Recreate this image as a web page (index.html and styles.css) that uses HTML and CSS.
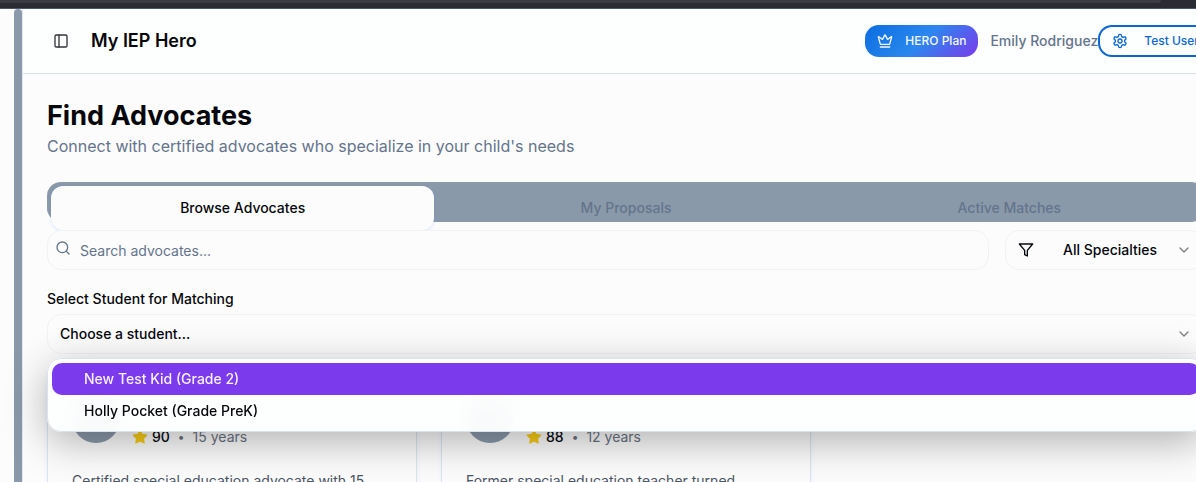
FILE: index.html
```html
<!DOCTYPE html>
<html lang="en">
<head>
<meta charset="utf-8">
<meta name="viewport" content="width=device-width, initial-scale=1">
<title>My IEP Hero</title>
<link rel="stylesheet" href="styles.css">
</head>
<body>
<div class="chrome"><div class="chrome-tab"></div></div>
<div class="shell">
  <div class="rail"></div>
  <div class="page">
    <header class="header">
      <button class="toggle" aria-label="Toggle sidebar">
        <svg class="icon" viewBox="0 0 24 24"><rect x="3" y="3" width="18" height="18" rx="2"/><path d="M9 3v18"/></svg>
      </button>
      <span class="brand">My IEP Hero</span>
      <div class="account">
        <button class="plan">
          <svg class="icon" viewBox="0 0 24 24"><path d="M11.562 3.266a.5.5 0 0 1 .876 0L15.39 8.87a1 1 0 0 0 1.516.294L21.183 5.5a.5.5 0 0 1 .798.519l-2.834 10.246a1 1 0 0 1-.956.734H5.81a1 1 0 0 1-.957-.734L2.02 6.02a.5.5 0 0 1 .798-.519l4.276 3.664a1 1 0 0 0 1.516-.294z"/><path d="M5 21h14"/></svg>
          HERO Plan
        </button>
        <span class="user-name">Emily Rodriguez</span>
        <button class="user">
          <svg class="icon" viewBox="0 0 24 24"><path d="M12.22 2h-.44a2 2 0 0 0-2 2v.18a2 2 0 0 1-1 1.73l-.43.25a2 2 0 0 1-2 0l-.15-.08a2 2 0 0 0-2.73.73l-.22.38a2 2 0 0 0 .73 2.73l.15.1a2 2 0 0 1 1 1.72v.51a2 2 0 0 1-1 1.74l-.15.09a2 2 0 0 0-.73 2.73l.22.38a2 2 0 0 0 2.73.73l.15-.08a2 2 0 0 1 2 0l.43.25a2 2 0 0 1 1 1.73V20a2 2 0 0 0 2 2h.44a2 2 0 0 0 2-2v-.18a2 2 0 0 1 1-1.73l.43-.25a2 2 0 0 1 2 0l.15.08a2 2 0 0 0 2.73-.73l.22-.39a2 2 0 0 0-.73-2.73l-.15-.08a2 2 0 0 1-1-1.74v-.5a2 2 0 0 1 1-1.74l.15-.09a2 2 0 0 0 .73-2.73l-.22-.38a2 2 0 0 0-2.73-.73l-.15.08a2 2 0 0 1-2 0l-.43-.25a2 2 0 0 1-1-1.73V4a2 2 0 0 0-2-2z"/><circle cx="12" cy="12" r="3"/></svg>
          Test User
        </button>
      </div>
    </header>
    <main class="main">
      <h1 class="title">Find Advocates</h1>
      <p class="subtitle">Connect with certified advocates who specialize in your child's needs</p>
      <div class="tabs" role="tablist">
        <button class="tab tab-active" role="tab" aria-selected="true">Browse Advocates</button>
        <button class="tab" role="tab" aria-selected="false">My Proposals</button>
        <button class="tab" role="tab" aria-selected="false">Active Matches</button>
      </div>
      <div class="filters">
        <div class="search">
          <svg class="icon search-icon" viewBox="0 0 24 24"><circle cx="11" cy="11" r="8"/><path d="m21 21-4.300-4.300"/></svg>
          <input class="field search-input" type="text" placeholder="Search advocates..." aria-label="Search advocates">
        </div>
        <div class="specialty">
          <svg class="icon funnel" viewBox="0 0 24 24"><path d="M22 3H2l8 9.460V19l4 2v-8.540z"/></svg>
          <select class="field specialty-select" aria-label="Specialty"><option>All Specialties</option></select>
          <svg class="icon chevron" viewBox="0 0 24 24"><path d="m6 9 6 6 6-6"/></svg>
        </div>
      </div>
      <label class="label" for="student">Select Student for Matching</label>
      <div class="student">
        <select class="field" id="student"><option>Choose a student...</option></select>
        <svg class="icon chevron" viewBox="0 0 24 24"><path d="m6 9 6 6 6-6"/></svg>
        <div class="menu" role="listbox" aria-label="Students">
          <div class="option option-active" role="option" aria-selected="true">New Test Kid (Grade 2)</div>
          <div class="option" role="option" aria-selected="false">Holly Pocket (Grade PreK)</div>
        </div>
      </div>
      <div class="cards">
        <article class="card">
          <div class="card-head">
            <div class="avatar"></div>
            <div class="rating">
              <svg class="star" viewBox="0 0 24 24"><path d="m12 2 3.090 6.260L22 9.270l-5 4.870 1.180 6.880L12 17.770l-6.180 3.250L7 14.140 2 9.270l6.910-1.010z"/></svg>
              <span class="score">90</span><span class="dot">•</span><span>15 years</span>
            </div>
          </div>
          <p class="bio">Certified special education advocate with 15</p>
        </article>
        <article class="card">
          <div class="card-head">
            <div class="avatar"></div>
            <div class="rating">
              <svg class="star" viewBox="0 0 24 24"><path d="m12 2 3.090 6.260L22 9.270l-5 4.870 1.180 6.880L12 17.770l-6.180 3.250L7 14.140 2 9.270l6.910-1.010z"/></svg>
              <span class="score">88</span><span class="dot">•</span><span>12 years</span>
            </div>
          </div>
          <p class="bio">Former special education teacher turned</p>
        </article>
      </div>
    </main>
  </div>
</div>
</body>
</html>
```

FILE: styles.css
```css
* { box-sizing: border-box; }
html, body { height: 100%; }
body {
  margin: 0;
  display: flex;
  flex-direction: column;
  overflow: hidden;
  background: #fcfcfd;
  color: #05070b;
  font: 500 14px/20px Inter, "Liberation Sans", sans-serif;
}
button, input, select { font: inherit; color: inherit; }
button { border: 0; background: none; padding: 0; }
.icon {
  width: 16px;
  height: 16px;
  flex: none;
  fill: none;
  stroke: currentColor;
  stroke-width: 2;
  stroke-linecap: round;
  stroke-linejoin: round;
}
.chrome {
  flex: none;
  height: 9px;
  background: #2a2b33;
  border-bottom: 1px solid #4a5569;
}
.chrome-tab {
  height: 3px;
  margin-right: 35px;
  background: #3a3b45;
  border-radius: 0 0 3px 0;
}
.shell { flex: 1; display: flex; min-height: 0; padding-left: 14px; overflow: hidden; }
.rail { flex: none; width: 8px; background: #8a99aa; border-radius: 4px 4px 0 0; }
/* The page column runs past the right edge of the window. */
.page {
  flex: 1;
  min-width: 0;
  margin-right: -33px;
  border-left: 1px solid #e3e8f0;
}
.header {
  display: flex;
  align-items: center;
  gap: 16px;
  height: 65px;
  padding: 0 12px 0 24px;
  background: #fdfefe;
  border-bottom: 1px solid #dde3ea;
}
.toggle { display: grid; place-items: center; width: 28px; height: 28px; }
.toggle .icon { color: #33363b; }
.brand { font-size: 18px; line-height: 28px; font-weight: 600; }
.account { display: flex; align-items: center; margin-left: auto; white-space: nowrap; }
.plan, .user {
  display: flex;
  align-items: center;
  height: 32px;
  padding: 0 12px;
  border-radius: 14px;
  font-size: 12px;
}
.plan {
  gap: 12px;
  margin-right: 12px;
  color: #f4f8ff;
  background: linear-gradient(135deg, #0a6ee0 0%, #2b87ee 50%, #7c3aed 100%);
}
.user-name { color: #64748b; }
.user {
  gap: 16px;
  padding-right: 16px;
  color: #0b68d2;
  background: #fdfefe;
  border: 2px solid #0b68d2;
}
.main { padding: 24px; }
.title { margin: 0; font-size: 27px; line-height: 36px; font-weight: 700; }
.subtitle { margin: 0 0 24px; font-size: 16px; line-height: 24px; font-weight: 400; color: #64748b; }
.tabs {
  display: grid;
  grid-template-columns: repeat(3, 1fr);
  height: 40px;
  margin-bottom: 8px;
  padding: 4px;
  border-radius: 14px;
  background: #8a99aa;
}
.tab { height: 44px; border-radius: 12px; color: #64748b; }
.tab-active { color: #05070b; background: #fcfcfd; box-shadow: 0 1px 3px #3b82f633; }
.field {
  display: block;
  width: 100%;
  height: 40px;
  padding: 0 12px;
  border: 1px solid #f1f2f4;
  border-radius: 14px;
  background: #fcfcfd;
  appearance: none;
  outline: none;
}
.filters { display: flex; gap: 16px; margin-bottom: 19px; }
.search { position: relative; flex: 1; }
.search-icon { position: absolute; left: 8px; top: 10px; color: #64748b; }
.search-input { padding-left: 32px; font-weight: 400; }
.search-input::placeholder { color: #64748b; opacity: 1; }
.specialty { position: relative; width: 200px; }
.specialty-select { padding-left: 57px; }
.funnel { position: absolute; left: 13px; top: 12px; }
.chevron { position: absolute; right: 13px; top: 12px; color: #808286; }
.label { display: block; width: max-content; margin-bottom: 5px; }
.student { position: relative; z-index: 1; }
.menu {
  position: absolute;
  top: 44px;
  left: 0;
  right: 0;
  padding: 4px;
  border: 1px solid #dbe2ea;
  border-radius: 14px;
  background: #fdfefef5;
  backdrop-filter: blur(12px);
  box-shadow: 0 10px 40px #0000004d;
}
.option { padding: 6px 32px; border-radius: 10px; }
.option-active { color: #f5f0ff; background: #7c3aed; }
.cards {
  display: grid;
  grid-template-columns: repeat(3, 1fr);
  gap: 24px;
  margin-top: 16px;
}
.card {
  padding: 24px;
  border: 1px solid #dbe4f0;
  border-radius: 14px;
  background: #fcfcfd;
  box-shadow: 0 1px 4px #3b82f61a;
}
.card-head { display: flex; align-items: flex-start; gap: 12px; }
.avatar { width: 48px; height: 48px; border-radius: 50%; background: #8a99aa; }
.rating {
  display: flex;
  align-items: center;
  gap: 8px;
  margin-top: 32px;
  font-weight: 400;
  color: #6b7280;
}
.star { width: 16px; height: 16px; fill: #facc15; stroke: #facc15; stroke-width: 2; stroke-linejoin: round; }
.score { margin-left: -4px; font-weight: 500; color: #05070b; }
.dot { font-size: 12px; }
.bio { margin: 24px 0 0; font-weight: 400; color: #4b5563; }
```
